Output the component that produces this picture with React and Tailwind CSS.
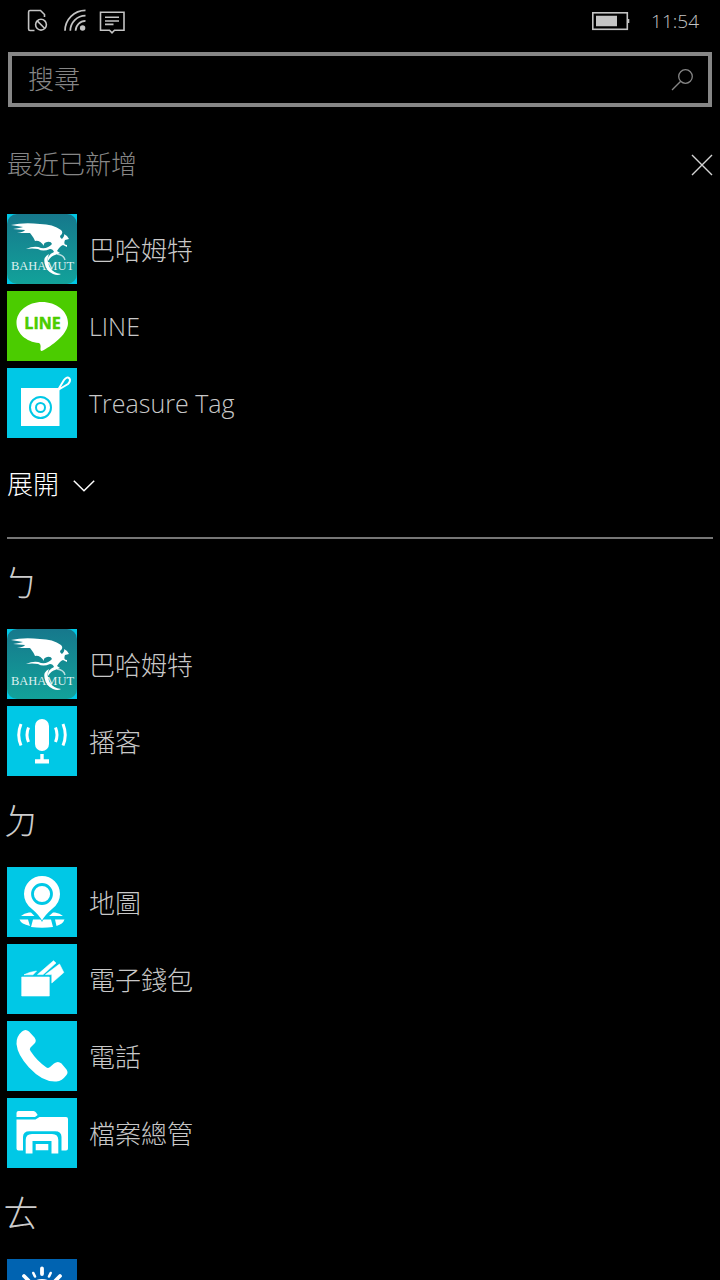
import React from "react";

function BahamutIcon({ id }) {
  return (
    <svg viewBox="0 0 70 70" className="size-full" aria-hidden="true">
      <defs>
        <linearGradient id={id} x1="0" y1="0" x2="0" y2="1">
          <stop offset="0" stopColor="#16788c" />
          <stop offset="1" stopColor="#12a29a" />
        </linearGradient>
      </defs>
      <rect width="70" height="70" rx="10" fill={`url(#${id})`} />
      <path
        fill="#fff"
        d="M4 11 Q17 8 33 10 Q46 10 54 16 Q57 19 53 22 Q53 24 55 25 Q58 22 57 20 L60 22 L62 25 L58 26 Q56 31 60 31 L60 33 L56 31 Q53 32 50 37 L53 39 L48 41 Q44 42 41 47 Q40 41 47 38 Q46 35 43 35 Q36 38 31 35 Q25 34 19 35 Q28 31 34 34 Q41 35 45 30 Q44 27 40 28 Q36 29 37 32 Q33 26 28 27 Q27 24 23 19 L10 19 Q17 18 18 16 L6 15 Q13 14 16 13 Z"
      />
      <path fill="none" stroke="#fff" strokeOpacity=".7" strokeWidth="1.4" d="M50 40 Q57 41 58 46" />
      <text x="35.500" y="56" textAnchor="middle" fill="#dff1f1" fontFamily="Liberation Serif, serif" fontSize="12.500">
        BAHAMUT
      </text>
      <path fill="#fff" d="M42 40 Q36 43 37.500 49 Q39 57 46 60 Q51 62 54 60 Q46 59 42.500 53 Q39 46 42 40 Z" />
    </svg>
  );
}

function LineIcon() {
  return (
    <svg viewBox="0 0 70 70" className="size-full" aria-hidden="true">
      <path fill="#fff" d="M35 11 C49 11 61 20 61 32 C61 42 48 53 36 59.5 Q33 61 33.500 57 Q34 53 32 52 C19 51 9.500 42 9.500 32 C9.500 20 21 11 35 11 Z" />
      <text x="35.500" y="38" textAnchor="middle" fill="#4bcc00" stroke="#4bcc00" strokeWidth=".5" strokeLinejoin="round" fontFamily="Open Sans, sans-serif" fontWeight="700" fontSize="16">
        LINE
      </text>
    </svg>
  );
}

function TagIcon() {
  return (
    <svg viewBox="0 0 70 70" className="size-full" aria-hidden="true">
      <rect x="14" y="20" width="38.500" height="38" fill="#fff" />
      <path fill="none" stroke="#fff" strokeWidth="2" d="M51 22 L57 12 Q60 8 62.500 10.500 Q64 13 61 16 L51 22" />
      <circle cx="33.500" cy="39.500" r="10.500" fill="none" stroke="#00c8e6" strokeWidth="2" />
      <circle cx="33.500" cy="39.500" r="4.500" fill="none" stroke="#00c8e6" strokeWidth="2" />
    </svg>
  );
}

function PodcastIcon() {
  return (
    <svg viewBox="0 0 70 70" className="size-full" aria-hidden="true">
      <rect x="28" y="13" width="14" height="32" rx="7" fill="#fff" />
      <path fill="#fff" d="M33.300 48 H36.700 V53.300 H42 V57.600 H28 V53.300 H33.300 Z" />
      <path
        fill="none"
        stroke="#fff"
        strokeWidth="3"
        d="M21.500 21.500 Q18.500 29 21.500 36 M14 18 Q9.500 29 14 39.500 M48.500 21.500 Q51.500 29 48.500 36 M56 18 Q60.500 29 56 39.500"
      />
    </svg>
  );
}

function MapIcon() {
  return (
    <svg viewBox="0 0 70 70" className="size-full" aria-hidden="true">
      <path
        fill="#fff"
        d="M14 49 Q17 46 22 45.500 H24 L27.500 49 Z M42 49 L46 45.500 H48 Q53 46 56 49 Z M12.500 52.500 H21 L23 59 Q14 57 12.500 52.500 Z M48 52.500 H57.500 Q56 57 49.500 59 Z M26 52.500 H44 L46 60 Q35 61.500 24 60 Z"
      />
      <path
        fill="#fff"
        stroke="#00c8e6"
        strokeWidth="1.500"
        paintOrder="stroke"
        d="M35 53.500 Q32 48 25 42 Q17 36 17 27 A18 18 0 0 1 53 27 Q53 36 45 42 Q38 48 35 53.500 Z"
      />
      <circle cx="35" cy="27" r="9.500" fill="#fff" stroke="#00c8e6" strokeWidth="2.800" />
    </svg>
  );
}

function WalletIcon() {
  return (
    <svg viewBox="0 0 70 70" className="size-full" aria-hidden="true">
      <path
        fill="#fff"
        stroke="#fff"
        strokeWidth=".6"
        strokeLinejoin="round"
        d="M14.700 33 H42.300 V52 H14.700 Z M17 30.800 Q22 28 29.500 27 L26 30.800 Z M30.500 30.600 L46.500 16.700 L49 19 L36 30.600 Z M38.500 30.600 L52.500 20 L56.800 28.500 L44.800 39 V30.600 Z"
      />
    </svg>
  );
}

function PhoneIcon() {
  return (
    <svg viewBox="0 0 70 70" className="size-full" aria-hidden="true">
      <path
        fill="#fff"
        d="M15 10.500 Q18.500 7.500 22 10.500 L27.500 16.500 Q30 20 27.500 22.500 L23.500 26.500 Q22 28 23.500 30 Q30 40 39.500 46.500 Q41 47.500 43 46 L47 42.500 Q51 39.500 54.500 42.500 L59.500 48.500 Q61.500 51.500 59.500 54 Q55 60 49.500 60.500 Q36 61.500 22 46.500 Q10.500 34 9.500 23 Q9 15.500 15 10.500 Z"
      />
    </svg>
  );
}

function FolderIcon() {
  return (
    <svg viewBox="0 0 70 70" className="size-full" aria-hidden="true">
      <path
        fill="#fff"
        d="M9.500 19 V15 Q9.500 13 11.500 13 H26.500 Q28 13 29 14.500 L30.700 17 L28 19 Z M9.500 21.500 H28.500 L32.500 19 H59 Q61 19 61 21 V50.500 Q61 52.500 59 52.500 H54.500 V39 Q54.500 33.200 48 33.200 H22.500 Q16 33.200 16 39 V52.500 H11.500 Q9.500 52.500 9.500 50.500 Z"
      />
      <path fill="#fff" d="M18.700 55.600 V42 Q18.700 36 25 36 H45 Q51.300 36 51.300 42 V55.600 H44.500 V43 H25.500 V55.600 Z M28.700 46 H41.300 V52.200 H28.700 Z" />
    </svg>
  );
}

function WeatherIcon() {
  return (
    <svg viewBox="0 0 70 70" className="size-full" aria-hidden="true">
      <circle cx="35" cy="36" r="14" fill="none" stroke="#fff" strokeWidth="4" />
      <path fill="none" stroke="#fff" strokeWidth="3.800" strokeLinecap="round" d="M35 9.500 V15 M17 17 L21.500 21.500 M53 17 L48.500 21.500" />
      <path fill="none" stroke="#fff" strokeWidth="2.600" strokeLinecap="round" d="M26.300 14 L28 17.500 M43.700 14 L42 17.500" />
    </svg>
  );
}

function AppRow({ name, latin = false, tile = "bg-[#00c8e6]", children }) {
  return (
    <li>
      <a href="#app" className="flex items-center gap-3">
        <span className={`block size-[70px] shrink-0 overflow-hidden ${tile}`}>{children}</span>
        <span className={`leading-8 text-[#c8c8c8] ${latin ? "text-[25px]" : "pt-0.5 text-[26px]"}`}>{name}</span>
      </a>
    </li>
  );
}

function Letter({ children }) {
  return <h2 className="-ml-1 flex h-[91px] items-center text-[36px] leading-10 text-[#cccccc]">{children}</h2>;
}

function StatusBar() {
  return (
    <header className="flex h-[52px] shrink-0 items-start justify-between pt-1 pr-[21px] pl-[26px] text-[#c4c4c4]">
      <div className="flex gap-3 pt-1" aria-hidden="true">
        <svg viewBox="0 0 24 26" className="h-[26px] w-6" fill="none" stroke="currentColor" strokeWidth="1.600">
          <path d="M8.500 22.500 H4 Q2.600 22.500 2.600 21 V4 Q2.600 2.500 4 2.500 H14.500 L18.500 6.500 V9" />
          <circle cx="15" cy="16.700" r="5.400" />
          <path d="M11.200 12.900 L18.800 20.500" />
        </svg>
        <svg viewBox="0 0 24 26" className="h-[26px] w-6" fill="none" stroke="currentColor" strokeWidth="1.700">
          <path d="M23.500 2.300 A20.500 20.500 0 0 0 3 22.800 M23.500 7.600 A15.200 15.200 0 0 0 8.300 22.800 M23.500 12.900 A9.900 9.900 0 0 0 13.600 22.800" />
          <circle cx="20.600" cy="20" r="2.700" fill="currentColor" stroke="none" />
        </svg>
        <svg viewBox="0 0 28 26" className="h-[26px] w-7" fill="none" stroke="currentColor" strokeWidth="1.600">
          <path d="M2.500 4.200 H26 V22.200 H16.500 L14 24.800 L11.500 22.200 H2.500 Z M7 9.200 H21 M7 13 H21 M7 16.400 H15.500" />
        </svg>
      </div>
      <div className="flex items-start gap-5">
        <svg viewBox="0 0 40 26" className="mt-1 h-[26px] w-10" fill="none" stroke="currentColor" strokeWidth="1.600" aria-hidden="true">
          <rect x="1.800" y="4.800" width="34.500" height="16.500" />
          <path fill="currentColor" stroke="none" d="M5 7.700 H26 V18.300 H5 Z M36.500 11 H38.300 V15 H36.500 Z" />
        </svg>
        <time className="text-[19px] leading-[34px]">11:54</time>
      </div>
    </header>
  );
}

export default function App() {
  return (
    <div className="flex h-screen flex-col overflow-hidden bg-black font-['Open_Sans','Noto_Sans_CJK_TC',sans-serif] font-light">
      <StatusBar />
      <form role="search" className="mx-2 flex h-[55px] shrink-0 items-center border-4 border-[#868686] pr-3.5 pl-4">
        <input
          type="search"
          aria-label="搜尋"
          placeholder="搜尋"
          className="h-10 min-w-0 flex-1 bg-transparent pb-0.5 text-[26px] text-[#c4c4c4] outline-none placeholder:text-[#868686]"
        />
        <svg viewBox="0 0 24 24" className="size-6" fill="none" stroke="#868686" strokeWidth="1.300" aria-hidden="true">
          <circle cx="15.500" cy="8.500" r="6.800" />
          <path d="M10.700 13.300 L2 22" />
        </svg>
      </form>

      <main className="min-h-0 flex-1 overflow-y-auto px-[7px] [scrollbar-width:none]">
        <section>
          <div className="flex h-[107px] items-center justify-between pt-2">
            <h2 className="pb-0.5 text-[26px] leading-8 text-[#868686]">最近已新增</h2>
            <button type="button" aria-label="關閉" className="text-[#d4d4d4]">
              <svg viewBox="0 0 22 22" className="size-[22px]" fill="none" stroke="currentColor" strokeWidth="1.400">
                <path d="M1 1 L21 21 M21 1 L1 21" />
              </svg>
            </button>
          </div>
          <ul className="flex flex-col gap-[7px]">
            <AppRow name="巴哈姆特"><BahamutIcon id="recent-bahamut" /></AppRow>
            <AppRow name="LINE" latin tile="bg-[#4bcc00]"><LineIcon /></AppRow>
            <AppRow name="Treasure Tag" latin><TagIcon /></AppRow>
          </ul>
          <button type="button" className="flex h-[99px] items-center gap-3.5 pb-2 text-[26px] leading-8 text-white">
            展開
            <svg viewBox="0 0 22 12" className="mt-1 h-3 w-[22px]" fill="none" stroke="currentColor" strokeWidth="1.500" aria-hidden="true">
              <path d="M.8 .8 L11 10.800 L21.200 .8" />
            </svg>
          </button>
        </section>
        <hr className="-mb-px border-t-2 border-[#767676]" />

        <section>
          <Letter>ㄅ</Letter>
          <ul className="flex flex-col gap-[7px]">
            <AppRow name="巴哈姆特"><BahamutIcon id="list-bahamut" /></AppRow>
            <AppRow name="播客"><PodcastIcon /></AppRow>
          </ul>
        </section>
        <section>
          <Letter>ㄉ</Letter>
          <ul className="flex flex-col gap-[7px]">
            <AppRow name="地圖"><MapIcon /></AppRow>
            <AppRow name="電子錢包"><WalletIcon /></AppRow>
            <AppRow name="電話"><PhoneIcon /></AppRow>
            <AppRow name="檔案總管"><FolderIcon /></AppRow>
          </ul>
        </section>
        <section>
          <Letter>ㄊ</Letter>
          <ul className="flex flex-col gap-[7px]">
            <AppRow name="" tile="bg-[#0063b1]"><WeatherIcon /></AppRow>
          </ul>
        </section>
      </main>
    </div>
  );
}
